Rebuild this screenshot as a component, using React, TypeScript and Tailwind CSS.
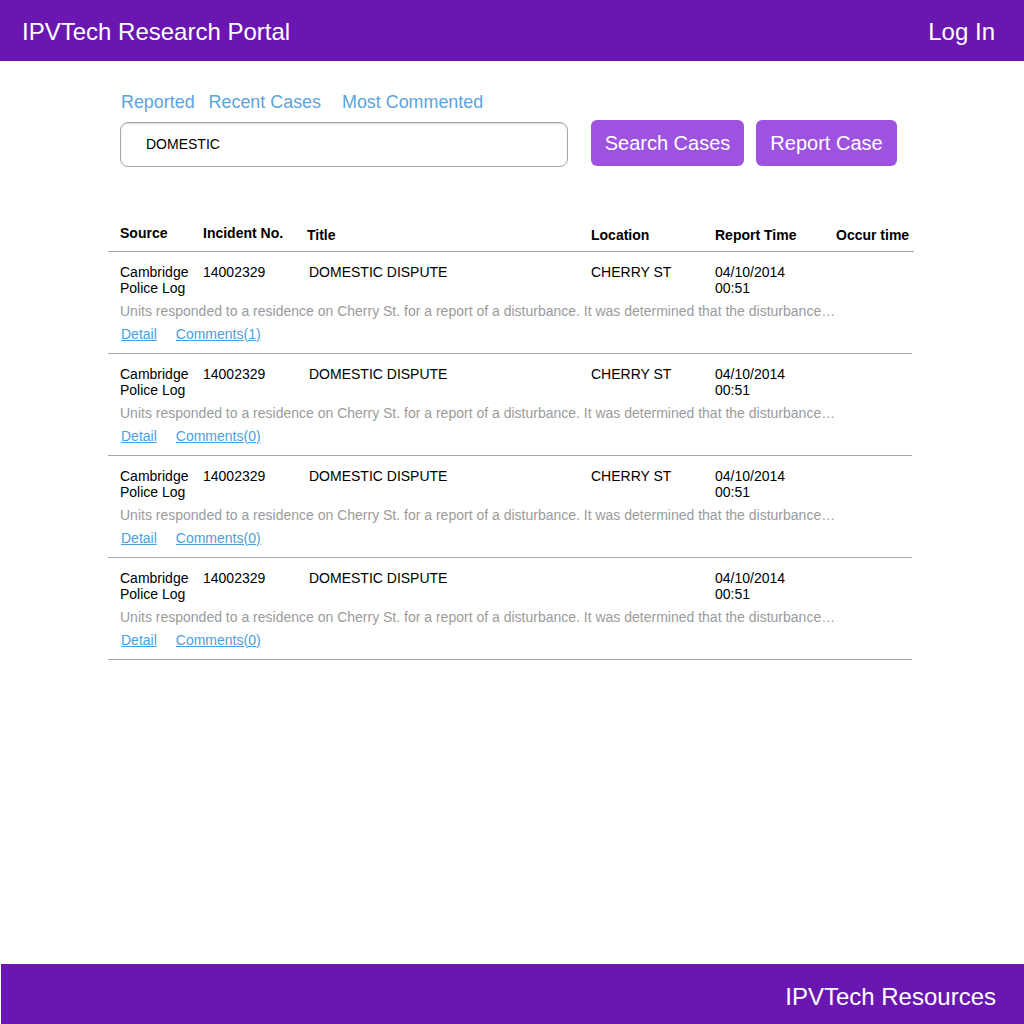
import React from "react";

const rows = [
  { comments: 1, location: "CHERRY ST" },
  { comments: 0, location: "CHERRY ST" },
  { comments: 0, location: "CHERRY ST" },
  { comments: 0, location: "" },
];

const cols = "grid grid-cols-[83px_104px_284px_124px_121px_78px]";

export default function App() {
  return (
    <div
      className="h-[1024px] w-[1024px] flex flex-col bg-white text-black"
      style={{ fontFamily: '"Liberation Sans", Arial, sans-serif' }}
    >
      <header className="h-[61px] bg-[#6a17b1] flex items-center justify-between pl-[22px] pr-[29px] pt-[2px] text-white text-[24px] leading-none">
        <span>IPVTech Research Portal</span>
        <span>Log In</span>
      </header>

      <main className="flex-1">
        <div className="pl-[121px] pt-[31px]">
          <nav className="flex text-[17.9px] leading-[21px] text-[#5ba4dd]">
            <span>Reported</span>
            <span className="ml-[14px]">Recent Cases</span>
            <span className="ml-[21px]">Most Commented</span>
          </nav>
          <div className="flex items-start mt-[7px] -ml-px">
            <div className="mt-[2px] w-[448px] h-[45px] rounded-[8px] border border-[#a8a8a8] shadow-[inset_0_1px_2px_rgba(0,0,0,0.15)] flex items-center pl-[25px] text-[14px]">
              DOMESTIC
            </div>
            <button className="ml-[23px] w-[153px] h-[46px] rounded-[6px] bg-[#9d52e0] text-white text-[20px]">
              Search Cases
            </button>
            <button className="ml-[12px] w-[141px] h-[46px] rounded-[6px] bg-[#9d52e0] text-white text-[20px]">
              Report Case
            </button>
          </div>
        </div>

        <div className="ml-[108px] w-[806px] mt-[58px] text-[14px] leading-[16px]">
          <div className={`${cols} pl-[12px] pb-[8px] border-b border-[#a8a8a8] font-bold`}>
            <span>Source</span>
            <span>Incident No.</span>
            <span className="mt-[2px]">Title</span>
            <span className="mt-[2px]">Location</span>
            <span className="mt-[2px]">Report Time</span>
            <span className="mt-[2px]">Occur time</span>
          </div>
          {rows.map((r, i) => (
            <div key={i} className="w-[804px] pl-[12px] pt-[12px] pb-[11px] border-b border-[#a8a8a8]">
              <div className={cols}>
                <span>
                  Cambridge
                  <br />
                  Police Log
                </span>
                <span>14002329</span>
                <span className="pl-[2px]">DOMESTIC DISPUTE</span>
                <span>{r.location}</span>
                <span>
                  04/10/2014
                  <br />
                  00:51
                </span>
                <span></span>
              </div>
              <div className="mt-[7px] text-[#9b9b9b] whitespace-nowrap">
                Units responded to a residence on Cherry St. for a report of a disturbance. It was determined that the disturbance…
              </div>
              <div className="mt-[7px] flex text-[#4a9fe0] underline pl-px">
                <span>Detail</span>
                <span className="ml-[19px]">Comments({r.comments})</span>
              </div>
            </div>
          ))}
        </div>
      </main>

      <footer className="h-[60px] ml-px bg-[#6a17b1] flex items-center justify-end pr-[28px] pt-[5px] text-white text-[24px] leading-none">
        IPVTech Resources
      </footer>
    </div>
  );
}
